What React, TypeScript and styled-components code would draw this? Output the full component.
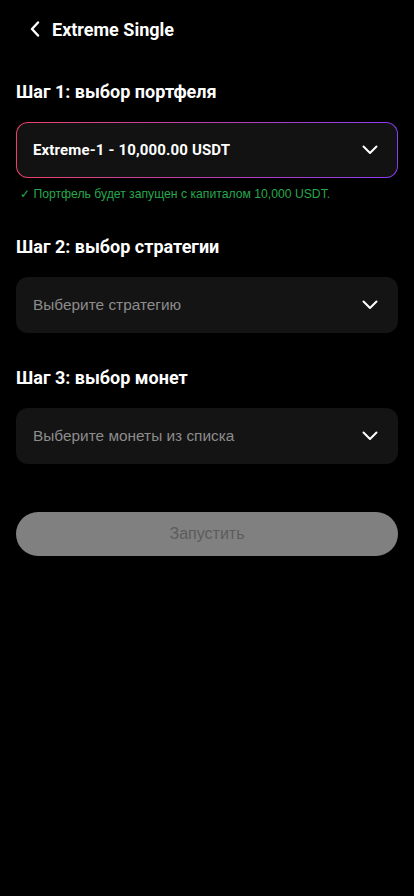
import React from "react";
import styled, { createGlobalStyle } from "styled-components";

const Global = createGlobalStyle`
  html, body { margin: 0; padding: 0; background: #000; }
  body { font-family: "Liberation Sans", Arial, sans-serif; color: #fff; }
  * { box-sizing: border-box; }
`;

const heading = `"Roboto", "Liberation Sans", Arial, sans-serif`;

const Page = styled.div`
  width: 414px;
  min-height: 896px;
  background: #000;
  padding: 0 16px;
  display: flex;
  flex-direction: column;
`;

const Header = styled.header`
  height: 58px;
  display: flex;
  align-items: center;
  gap: 11px;
  padding-left: 13px;
`;

const BackButton = styled.button`
  background: none;
  border: none;
  padding: 0;
  width: 12px;
  height: 20px;
  display: flex;
  align-items: center;
  justify-content: center;
  color: #fff;
`;

const Title = styled.h1`
  margin: 0;
  font-family: ${heading};
  font-size: 18px;
  font-weight: 700;
`;

const Step = styled.section`
  display: flex;
  flex-direction: column;
`;

const StepTitle = styled.h2<{ $top: number }>`
  margin: 0;
  font-family: ${heading};
  font-size: 18px;
  font-weight: 700;
  line-height: 22px;
  margin-top: ${(p) => p.$top}px;
  margin-bottom: 19px;
`;

const Select = styled.div<{ $active?: boolean }>`
  height: 56px;
  border-radius: 12px;
  display: flex;
  align-items: center;
  justify-content: space-between;
  padding: 0 19px 0 16px;
  border: 1px solid transparent;
  background: ${(p) =>
    p.$active
      ? "linear-gradient(#121212, #121212) padding-box, linear-gradient(90deg, #e8436a, #8b3cf2) border-box"
      : "#141414"};
`;

const SelectText = styled.span<{ $placeholder?: boolean }>`
  font-family: ${(p) => (p.$placeholder ? `"Liberation Sans", Arial, sans-serif` : heading)};
  font-size: ${(p) => (p.$placeholder ? "15.4px" : "15px")};
  font-weight: ${(p) => (p.$placeholder ? 400 : 700)};
  letter-spacing: ${(p) => (p.$placeholder ? "0" : "0.15px")};
  color: ${(p) => (p.$placeholder ? "#8c8c8c" : "#fff")};
`;

const Note = styled.p`
  margin: 8px 0 0 4px;
  font-size: 12.2px;
  line-height: 16px;
  color: #27a84c;
`;

const StartButton = styled.button`
  margin-top: 48px;
  height: 44px;
  border-radius: 22px;
  border: none;
  background: #808080;
  color: #5c5c5c;
  font-family: "Liberation Sans", Arial, sans-serif;
  font-size: 16px;
`;

const Chevron = () => (
  <svg width="16" height="10" viewBox="0 0 16 10" fill="none">
    <path d="M1.5 1.5 L8 8 L14.5 1.5" stroke="#fff" strokeWidth="2" strokeLinecap="round" strokeLinejoin="round" />
  </svg>
);

const BackIcon = () => (
  <svg width="10" height="16" viewBox="0 0 10 16" fill="none">
    <path d="M8 1.5 L2 8 L8 14.5" stroke="#fff" strokeWidth="2.4" strokeLinecap="round" strokeLinejoin="round" />
  </svg>
);

export default function App() {
  return (
    <>
      <Global />
      <Page>
        <Header>
          <BackButton>
            <BackIcon />
          </BackButton>
          <Title>Extreme Single</Title>
        </Header>

        <Step>
          <StepTitle $top={23}>Шаг 1: выбор портфеля</StepTitle>
          <Select $active>
            <SelectText>Extreme-1 - 10,000.00 USDT</SelectText>
            <Chevron />
          </Select>
          <Note>✓ Портфель будет запущен с капиталом 10,000 USDT.</Note>
        </Step>

        <Step>
          <StepTitle $top={34}>Шаг 2: выбор стратегии</StepTitle>
          <Select>
            <SelectText $placeholder>Выберите стратегию</SelectText>
            <Chevron />
          </Select>
        </Step>

        <Step>
          <StepTitle $top={34}>Шаг 3: выбор монет</StepTitle>
          <Select>
            <SelectText $placeholder>Выберите монеты из списка</SelectText>
            <Chevron />
          </Select>
        </Step>

        <StartButton>Запустить</StartButton>
      </Page>
    </>
  );
}
